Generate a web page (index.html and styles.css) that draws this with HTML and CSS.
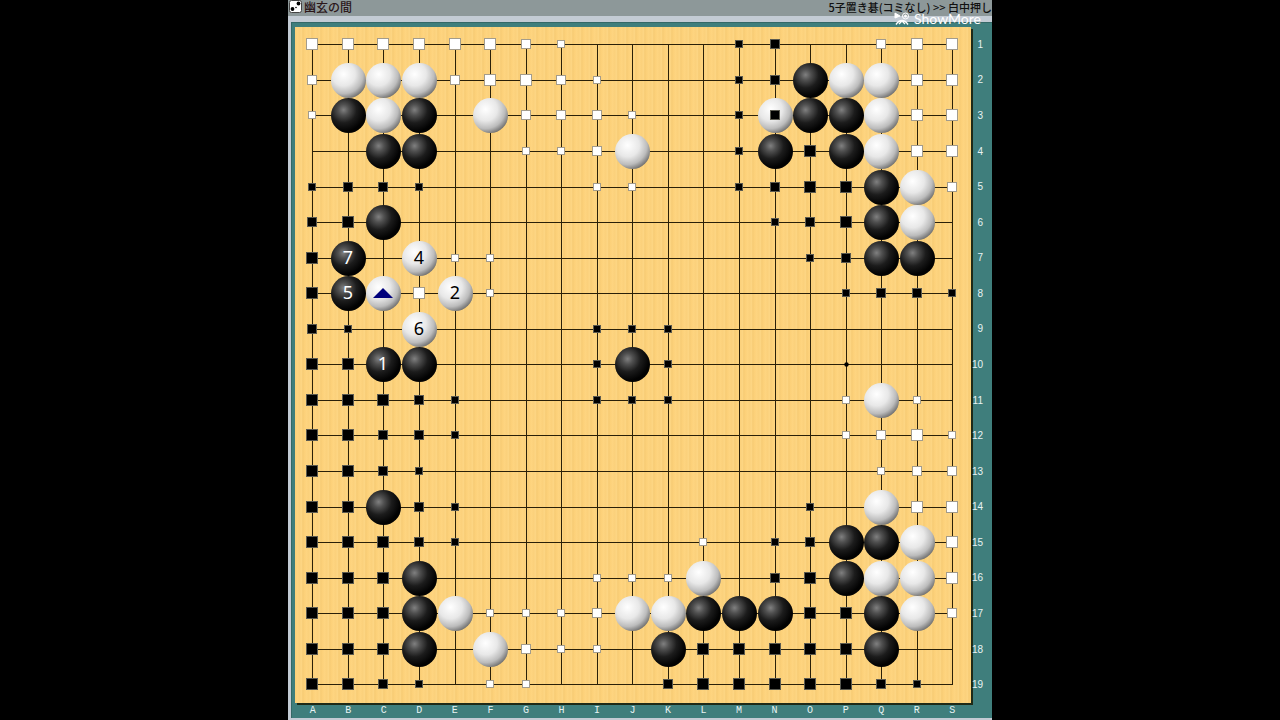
FILE: index.html
```html
<!DOCTYPE html>
<html lang="ja">
<head>
    <meta charset="UTF-8">
    <meta name="viewport" content="width=device-width, initial-scale=1.0">
    <title>幽玄の間</title>
    <link rel="stylesheet" href="styles.css">
</head>
<body>
    <div class="fenetre">
        <header class="titre">
            <svg class="icone" viewBox="0 0 13 13">
                <rect x="0.5" y="0.5" width="12" height="12" rx="2" fill="#fff" stroke="#444"/>
                <circle cx="9.5" cy="3.5" r="1.9"/>
                <circle cx="3.5" cy="9" r="1.9"/>
                <circle cx="7" cy="7.5" r="0.8"/>
            </svg>
            <h1>幽玄の間</h1>
            <p>5子置き碁(コミなし) &gt;&gt; 白中押し</p>
        </header>
        <main class="tapis">
            <svg class="goban" viewBox="0 0 676 676">
                <defs>
                    <radialGradient id="noir" cx="0.36" cy="0.34" r="0.62">
                        <stop offset="0" stop-color="#808080"/>
                        <stop offset="0.25" stop-color="#505050"/>
                        <stop offset="0.6" stop-color="#1c1c1c"/>
                        <stop offset="1" stop-color="#020202"/>
                    </radialGradient>
                    <radialGradient id="blanc" cx="0.36" cy="0.32" r="0.74">
                        <stop offset="0" stop-color="#ffffff"/>
                        <stop offset="0.45" stop-color="#e8e8e8"/>
                        <stop offset="0.75" stop-color="#bcbcbc"/>
                        <stop offset="1" stop-color="#686868"/>
                    </radialGradient>
                </defs>
            </svg>
            <div class="lignes"></div>
            <div class="colonnes"></div>
        </main>
        <div class="filigrane">
            <svg viewBox="0 0 16 14" fill="none" stroke="#fff">
                <path d="M1 1l5 3-5 2z" fill="#fff"/>
                <circle cx="11.5" cy="4" r="3"/>
                <circle cx="11.5" cy="4" r="1" fill="#fff"/>
                <path d="M2 12.5c2-3 4-4 6-4s4 1 6 4M5 12l3-3 3 3" stroke-width="1.4"/>
            </svg>
            <span>ShowMore</span>
        </div>
    </div>
    <script src="script.js"></script>
</body>
</html>
```

FILE: styles.css
```css
*{
    padding: 0;
    margin: 0;
    box-sizing: border-box;
}
body{
    background-color: #000;
    font-family: "Liberation Sans", "Noto Sans CJK JP", sans-serif;
}
.fenetre{
    position: relative;
    width: 55vw;
    margin: 0 auto;
    padding-bottom: 2px;
    background-color: #c3cbd4;
    overflow: hidden;
}
.titre{
    display: flex;
    align-items: center;
    height: 16px;
    padding: 0 0 3px 1px;
    background-color: #8d9899;
    color: #111;
    white-space: nowrap;
}
.icone{
    width: 13px;
    height: 13px;
    margin-right: 2px;
}
.titre h1{
    font-family: "Noto Sans CJK JP", sans-serif;
    font-size: 12px;
    line-height: 13px;
    font-weight: 500;
    color: #2b1719;
}
.titre p{
    margin-left: auto;
    font-family: "Noto Sans CJK JP", sans-serif;
    font-size: 11px;
    line-height: 12px;
    font-weight: 500;
}
.tapis{
    display: grid;
    grid-template-columns: 1fr 21px;
    grid-template-rows: auto 15px;
    margin: 6px 0 0 3px;
    padding: 4px 0 0 3px;
    background-color: #3f7e7c;
    border-top: 1px solid #346866;
    border-left: 1px solid #346866;
    font-size: 10px;
    line-height: 12px;
    color: #e8f4f4;
}
.goban{
    display: block;
    width: 100%;
    background-color: #fed580;
    background-image: repeating-linear-gradient(to right, #fcd078 0, #fed581 3px, #fbd07a 4px, #fdd684 7px, #f4c66c 8px, #fed581 9px);
    box-shadow: 2px 2px 0 #1f2a17;
}
.lignes{
    display: grid;
    grid-template-rows: repeat(19, 1fr);
    align-items: center;
    justify-items: end;
    padding-right: 9px;
}
.colonnes{
    display: grid;
    grid-template-columns: repeat(19, 1fr);
    align-items: center;
    justify-items: center;
    padding-right: 1px;
    font-family: "Liberation Mono", monospace;
}
.trait{
    stroke: #2a2008;
    stroke-width: 1;
    shape-rendering: crispEdges;
}
.carre-noir, .carre-blanc{
    stroke-width: 1;
    shape-rendering: crispEdges;
}
.carre-noir{
    fill: #000;
    stroke: #5b5a50;
}
.carre-blanc{
    fill: #fff;
    stroke: #a39c8c;
}
.numero{
    font-family: "Noto Sans", sans-serif;
    font-size: 18px;
    text-anchor: middle;
}
.filigrane{
    position: absolute;
    top: 12px;
    right: 11px;
    display: flex;
    align-items: center;
    gap: 4px;
    color: #fff;
    font-family: Lato, sans-serif;
    font-size: 14px;
    line-height: 14px;
}
.filigrane svg{
    width: 16px;
    height: 14px;
}
```

FILE: script.js
```js
// X / O : pierres, 1 2 3 : influence noire, a b c : influence blanche, * : hoshi
const position = [
    'ccccccba....12..bcc',
    'bOOObccba...12XOOcc',
    'aXOX.Obbba..1OXXOcc',
    '..XX..aabO..1X3XOcc',
    '1221....aa..1233XOb',
    '23X..........123XO.',
    '3X.Oaa........12XX.',
    '3XOcOa.........1221',
    '21.O....111........',
    '33XX....1X1....*...',
    '33321...111....aOa.',
    '33221..........abca',
    '3321............abb',
    '33X21.........1.Occ',
    '33321......a.12XXOc',
    '333X....aaaO.23XOOc',
    '333XOaaabOOXXX33XOb',
    '333X.Obaa.X33333X..',
    '3321.aa...23333321.'
];
const numeros = { C10: 1, E8: 2, D7: 4, B8: 5, D9: 6, B7: 7 };
const lettres = 'ABCDEFGHIJKLMNOPQRS';

const goban = document.querySelector('.goban');
const lignes = document.querySelector('.lignes');
const colonnes = document.querySelector('.colonnes');

const pos = (i) => 17 + Math.round(i * 640 / 18 + 0.3);

const ajouter = (nom, attributs, texte) => {
    const el = document.createElementNS('http://www.w3.org/2000/svg', nom);
    for (const cle in attributs) {
        el.setAttribute(cle, attributs[cle]);
    }
    if (texte) el.textContent = texte;
    goban.appendChild(el);
}

const carre = (x, y, niveau, classe) => {
    const taille = 6 + niveau * 2;
    ajouter('rect', {
        x: x - taille / 2 + 0.5,
        y: y - taille / 2 + 0.5,
        width: taille - 1,
        height: taille - 1,
        class: classe
    });
}

for (let i = 0; i < 19; i++) {
    const p = pos(i) + 0.5;
    ajouter('line', { x1: 17, y1: p, x2: 658, y2: p, class: 'trait' });
    ajouter('line', { x1: p, y1: 17, x2: p, y2: 658, class: 'trait' });

    const ligne = document.createElement('span');
    ligne.textContent = i + 1;
    lignes.appendChild(ligne);

    const colonne = document.createElement('span');
    colonne.textContent = lettres[i];
    colonnes.appendChild(colonne);
}

position.forEach((rang, j) => {
    [...rang].forEach((c, i) => {
        const x = pos(i);
        const y = pos(j);
        if (c === 'X' || c === 'O') {
            ajouter('circle', { cx: x + 0.5, cy: y + 0.5, r: 17.5, fill: c === 'X' ? 'url(#noir)' : 'url(#blanc)' });
            const n = numeros[lettres[i] + (j + 1)];
            if (n) {
                ajouter('text', { x: x, y: y + 6, class: 'numero', fill: c === 'X' ? '#fff' : '#000' }, n);
            }
        } else if (c === '*') {
            ajouter('circle', { cx: x + 0.5, cy: y + 0.5, r: 2.2 });
        } else if ('123'.includes(c)) {
            carre(x, y, Number(c), 'carre-noir');
        } else if ('abc'.includes(c)) {
            carre(x, y, 'abc'.indexOf(c) + 1, 'carre-blanc');
        }
    });
});

// pierre prise en N3 et dernier coup en C8
carre(pos(13), pos(2), 2, 'carre-noir');
ajouter('path', { d: `M${pos(2)} ${pos(7) - 5}l10 10h-20z`, fill: '#00007c' });
```
